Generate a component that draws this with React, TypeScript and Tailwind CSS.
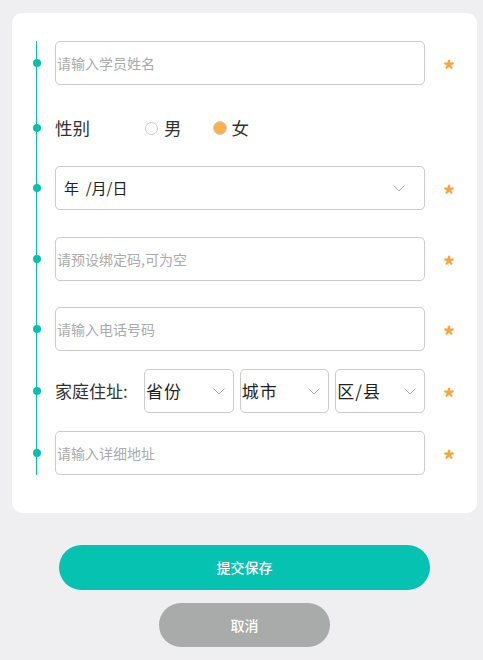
import React from "react";

const Chevron = ({ className = "" }: { className?: string }) => (
  <svg width="12" height="7" viewBox="0 0 12 7" className={className}>
    <path d="M0.5 0.5 L6 6 L11.5 0.5" fill="none" stroke="#b0b0b0" strokeWidth="1" />
  </svg>
);

const Dot = () => <span className="-ml-[4.5px] h-[8px] w-[8px] shrink-0 rounded-full bg-[#06c1ae]" />;

const Star = () => (
  <span className="flex w-[48px] shrink-0 justify-center pt-[11px] text-[24px] font-bold leading-none text-[#f7a53c]">*</span>
);

const TextRow = ({ ph, className = "" }: { ph: string; className?: string }) => (
  <div className={`flex items-center ${className}`}>
    <Dot />
    <div className="ml-[14.5px] flex h-[44px] flex-1 items-center rounded-[5px] border border-[#cccccc] px-[1px] text-[14px] text-[#aaaaaa]">
      {ph}
    </div>
    <Star />
  </div>
);

export default function App() {
  return (
    <div className="min-h-[660px] bg-[#efeff1] pl-[12px] pr-[6px] pt-[13px] font-['Noto_Sans_CJK_SC','Noto_Sans',sans-serif]">
      <div className="rounded-[10px] bg-white pb-[38px] pl-[24px] pr-[4px] pt-[28px]">
        <div className="border-l border-[#06c1ae]">
          <TextRow ph="请输入学员姓名" />

          <div className="mt-[21px] flex h-[44px] items-center">
            <Dot />
            <span className="ml-[14.5px] w-[90px] text-[17.5px] text-[#333333]">性别</span>
            <label className="flex items-center">
              <span className="h-[13px] w-[13px] rounded-full border border-[#cccccc] bg-white" />
              <span className="ml-[6px] text-[17.5px] text-[#333333]">男</span>
            </label>
            <label className="ml-[31px] flex items-center">
              <span className="h-[14px] w-[14px] rounded-full border border-[#cccccc] bg-[#fbb04a]" />
              <span className="ml-[5px] text-[17.5px] text-[#333333]">女</span>
            </label>
          </div>

          <div className="mt-[16px] flex items-center">
            <Dot />
            <div className="ml-[14.5px] flex h-[44px] flex-1 items-center justify-between rounded-[5px] border border-[#cccccc] pl-[8px] pr-[19px] text-[15px] text-[#222222]">
              <span>年&nbsp;&nbsp;/月/日</span>
              <Chevron />
            </div>
            <Star />
          </div>

          <TextRow ph="请预设绑定码,可为空" className="mt-[27px]" />
          <TextRow ph="请输入电话号码" className="mt-[26px]" />

          <div className="mt-[18px] flex items-center">
            <Dot />
            <span className="ml-[14.5px] w-[89px] shrink-0 text-[17px] text-[#333333]">家庭住址:</span>
            <div className="flex flex-1 gap-[6px]">
              {["省份", "城市", "区/县"].map((t) => (
                <div
                  key={t}
                  className="flex h-[44px] flex-1 items-center justify-between rounded-[5px] border border-[#cccccc] pl-[1px] pr-[8px] text-[17px] text-[#222222]"
                >
                  <span className="tracking-[1px]">{t}</span>
                  <Chevron />
                </div>
              ))}
            </div>
            <Star />
          </div>

          <TextRow ph="请输入详细地址" className="mt-[18px]" />
        </div>
      </div>

      <div className="mt-[32px] flex flex-col items-center">
        <button className="h-[45px] w-[371px] rounded-full bg-[#06c2b0] text-[14px] font-medium text-white">提交保存</button>
        <button className="mt-[13px] h-[44px] w-[171px] rounded-full bg-[#a9aaaa] text-[14px] font-medium text-white">取消</button>
      </div>
    </div>
  );
}
